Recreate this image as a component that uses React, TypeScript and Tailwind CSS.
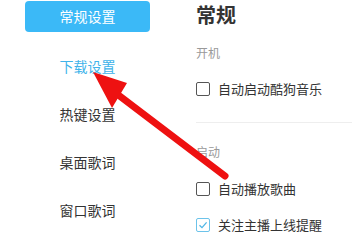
import React from "react";

const FONT = { fontFamily: '"Microsoft YaHei", "Noto Sans CJK SC", "Noto Sans", sans-serif' };

function Check({ checked = false, label }: { checked?: boolean; label: string }) {
  return (
    <div className="flex items-center h-[20px]">
      <span
        className={`flex items-center justify-center w-[14px] h-[14px] rounded-[2px] border ${
          checked ? "border-[#6cc3ea]" : "border-[#555]"
        }`}
      >
        {checked && (
          <svg width="10" height="10" viewBox="0 0 10 10">
            <path d="M1.5 5.2 L4 7.6 L8.6 2.4" fill="none" stroke="#4fb6e6" strokeWidth="1.3" />
          </svg>
        )}
      </span>
      <span className="ml-[8px] text-[13px] leading-[20px] text-[#333]">{label}</span>
    </div>
  );
}

export default function App() {
  const items = ["下载设置", "热键设置", "桌面歌词", "窗口歌词"];
  return (
    <div className="relative w-[352px] h-[237px] bg-white overflow-hidden flex" style={FONT}>
      <div className="w-[196px] shrink-0">
        <div className="mt-[1px] ml-[25px] w-[125px] h-[31px] rounded-[4px] bg-[#3bb9f7] text-white text-[14px] flex items-center justify-center">
          常规设置
        </div>
        <div className="mt-[10px] ml-[25px] w-[125px]">
          {items.map((t, i) => (
            <div
              key={t}
              className={`h-[48px] flex items-center justify-center text-[14px] ${
                i === 0 ? "text-[#40b3ea]" : "text-[#333]"
              }`}
            >
              {t}
            </div>
          ))}
        </div>
      </div>

      <div className="flex-1">
        <div className="h-[30px] flex items-center text-[20px] font-bold text-[#333]">常规</div>
        <div className="mt-[13px] h-[20px] flex items-center text-[12px] text-[#999]">开机</div>
        <div className="mt-[16px]">
          <Check label="自动启动酷狗音乐" />
        </div>
        <div className="mt-[23px] h-px bg-[#eeeeee]" />
        <div className="mt-[19px] h-[20px] flex items-center text-[12px] text-[#999]">启动</div>
        <div className="mt-[17px]">
          <Check label="自动播放歌曲" />
        </div>
        <div className="mt-[16px]">
          <Check checked label="关注主播上线提醒" />
        </div>
      </div>

      <svg className="absolute inset-0 pointer-events-none" width="352" height="237" viewBox="0 0 352 237">
        <line x1="117" y1="94" x2="225" y2="176" stroke="#ee1111" strokeWidth="7" strokeLinecap="round" />
        <polygon points="93,72 127,83 112,108" fill="#ee1111" />
      </svg>
    </div>
  );
}
